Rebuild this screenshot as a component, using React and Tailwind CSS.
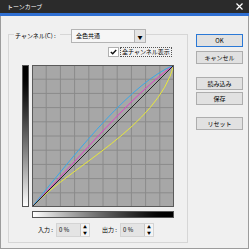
import React from 'react'

const font = "font-['Noto_Sans_CJK_JP','Noto_Sans',sans-serif]"

const Curves = () => {
  const lines = []
  for (let i = 1; i < 10; i++) {
    const p = (i * 142) / 10
    lines.push(<line key={'v' + i} x1={p} y1="0" x2={p} y2="142" stroke="#8a8a8a" strokeWidth="1" />)
    lines.push(<line key={'h' + i} x1="0" y1={p} x2="142" y2={p} stroke="#8a8a8a" strokeWidth="1" />)
  }
  return (
    <svg width="142" height="142" viewBox="0 0 142 142" className="block">
      <rect x="0" y="0" width="142" height="142" fill="#a7a7a7" />
      {lines}
      <path d="M0,142 C40,100 125,62 142,0" fill="none" stroke="#e8e83a" strokeWidth="1" />
      <path d="M0,142 C50,90 100,30 142,0" fill="none" stroke="#e040c8" strokeWidth="1" />
      <path d="M0,142 C50,80 100,18 142,0" fill="none" stroke="#3aa8e8" strokeWidth="1" />
      <line x1="0" y1="142" x2="142" y2="0" stroke="#222" strokeWidth="1" />
      <rect x="0.5" y="0.5" width="141" height="141" fill="none" stroke="#5a5a5a" strokeWidth="1" />
    </svg>
  )
}

const Spin = () => (
  <div className="w-[9px] h-full flex flex-col border-l border-[#c8c8c8] bg-[#f4f4f4] text-[4px] leading-none text-black">
    <div className="flex-1 flex items-center justify-center">▲</div>
    <div className="flex-1 flex items-center justify-center">▼</div>
  </div>
)

const NumberField = () => (
  <div className="w-[34px] h-[14px] flex border border-[#d4d4d4] bg-[#e4e4e4]">
    <div className="flex-1 flex items-center pl-[2px]">0 %</div>
    <Spin />
  </div>
)

const Button = ({ label, focused, className = '' }) => (
  <div
    className={`w-[47px] h-[13px] flex items-center justify-center bg-[#e1e1e1] border ${
      focused ? 'border-[#2a78d6]' : 'border-[#adadad]'
    } ${className}`}
  >
    {label}
  </div>
)

export default function App() {
  return (
    <div className={`w-[250px] h-[251px] bg-white ${font} text-[6px] leading-none text-black`}>
      <div className="w-[249px] h-[249px] flex flex-col">
        <div className="h-[13px] bg-[#2b2b2b] flex items-center justify-between pl-[7px] pr-[6px] text-white">
          <span>トーンカーブ</span>
          <svg width="7" height="7" viewBox="0 0 7 7">
            <path d="M0.5,0.5 L6.5,6.5 M6.5,0.5 L0.5,6.5" stroke="#fff" strokeWidth="1.2" />
          </svg>
        </div>
        <div className="h-[3px] bg-[#2f6fd2]" />
        <div className="flex-1 flex bg-[#f0f0f0] border-x border-b border-[#9c9c9c] pt-[18px] pl-[7px]">
          {/* group box */}
          <div className="w-[180px] h-[209px] border border-[#d6d6d6] flex flex-col">
            <div className="-mt-[6px] h-[14px] flex items-center">
              <span className="ml-[5px] w-[46px] px-[1px] bg-[#f0f0f0]">チャンネル(C) :</span>
              <div className="ml-[11px] w-[75px] h-[14px] flex border border-[#b4b4b4] bg-[#f6f6f6]">
                <div className="flex-1 flex items-center pl-[4px]">全色共通</div>
                <div className="w-[11px] flex items-center justify-center border-l border-[#b4b4b4] bg-[#e4e4e4] text-[5px]">
                  ▼
                </div>
              </div>
            </div>
            <div className="mt-[4px] h-[10px] flex items-center pl-[99px]">
              <div className="w-[11px] h-[10px] flex items-center justify-center border border-[#b0b0b0] bg-white">
                <svg width="7" height="6" viewBox="0 0 7 6">
                  <path d="M0.8,3 L2.7,4.8 L6.2,1" fill="none" stroke="#111" strokeWidth="1.4" />
                </svg>
              </div>
              <span className="ml-[1px] px-[1px] py-[1px] border border-dotted border-[#555]">全チャンネル表示</span>
            </div>
            <div className="mt-[8px] flex pl-[13px]">
              <div className="w-[7px] h-[142px] border border-[#555] bg-gradient-to-b from-black to-white" />
              <div className="ml-[3px]">
                <Curves />
              </div>
            </div>
            <div className="mt-[4px] ml-[23px] w-[142px] h-[7px] border border-[#555] bg-gradient-to-r from-white to-black" />
            <div className="mt-[5px] h-[14px] flex items-center pl-[29px]">
              <span>入力 :</span>
              <div className="ml-[3px]">
                <NumberField />
              </div>
              <span className="ml-[12px]">出力 :</span>
              <div className="ml-[3px]">
                <NumberField />
              </div>
            </div>
          </div>
          {/* buttons */}
          <div className="ml-[8px] flex flex-col">
            <Button label="OK" focused />
            <Button label="キャンセル" className="mt-[4px]" />
            <Button label="読み込み" className="mt-[13px]" />
            <Button label="保存" className="mt-[2px]" />
            <Button label="リセット" className="mt-[12px]" />
          </div>
        </div>
      </div>
    </div>
  )
}
